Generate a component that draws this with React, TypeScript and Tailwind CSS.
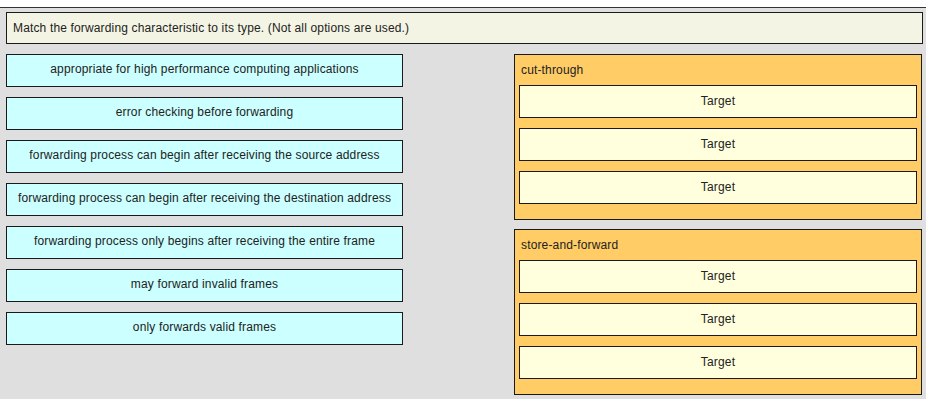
const options = [
  "appropriate for high performance computing applications",
  "error checking before forwarding",
  "forwarding process can begin after receiving the source address",
  "forwarding process can begin after receiving the destination address",
  "forwarding process only begins after receiving the entire frame",
  "may forward invalid frames",
  "only forwards valid frames",
];

const groups = ["cut-through", "store-and-forward"];

function Target() {
  return (
    <div className="h-[33px] border border-[#1a1a1a] bg-[#ffffdd] flex items-center justify-center pb-[2px]">
      Target
    </div>
  );
}

export default function App() {
  return (
    <div
      className="w-[926px] h-[399px] bg-[#dfdfdf] text-[12px] tracking-[0.15px] text-[#222] overflow-hidden"
      style={{ fontFamily: '"Liberation Sans", Arial, sans-serif' }}
    >
      <div className="h-[8px] bg-white border-b border-[#333]" />
      <div className="ml-[6px] mt-[4px] w-[917px] h-[32px] border border-[#1a1a1a] bg-[#f4f4e4] flex items-center pl-[6px] pb-[1px]">
        Match the forwarding characteristic to its type. (Not all options are used.)
      </div>
      <div className="flex mt-[10px] ml-[6px]">
        <div className="w-[397px] flex flex-col gap-[10px]">
          {options.map((o) => (
            <div
              key={o}
              className="h-[33px] border border-[#1a1a1a] bg-[#ccffff] flex items-center justify-center pb-[3px]"
            >
              {o}
            </div>
          ))}
        </div>
        <div className="ml-[111px] w-[408px] flex flex-col gap-[9px]">
          {groups.map((g) => (
            <div
              key={g}
              className="h-[166px] border border-[#1a1a1a] bg-[#ffcc66] px-[4px]"
            >
              <div className="h-[30px] flex items-center pl-[2px] pb-[1px]">{g}</div>
              <div className="flex flex-col gap-[10px]">
                <Target />
                <Target />
                <Target />
              </div>
            </div>
          ))}
        </div>
      </div>
    </div>
  );
}
